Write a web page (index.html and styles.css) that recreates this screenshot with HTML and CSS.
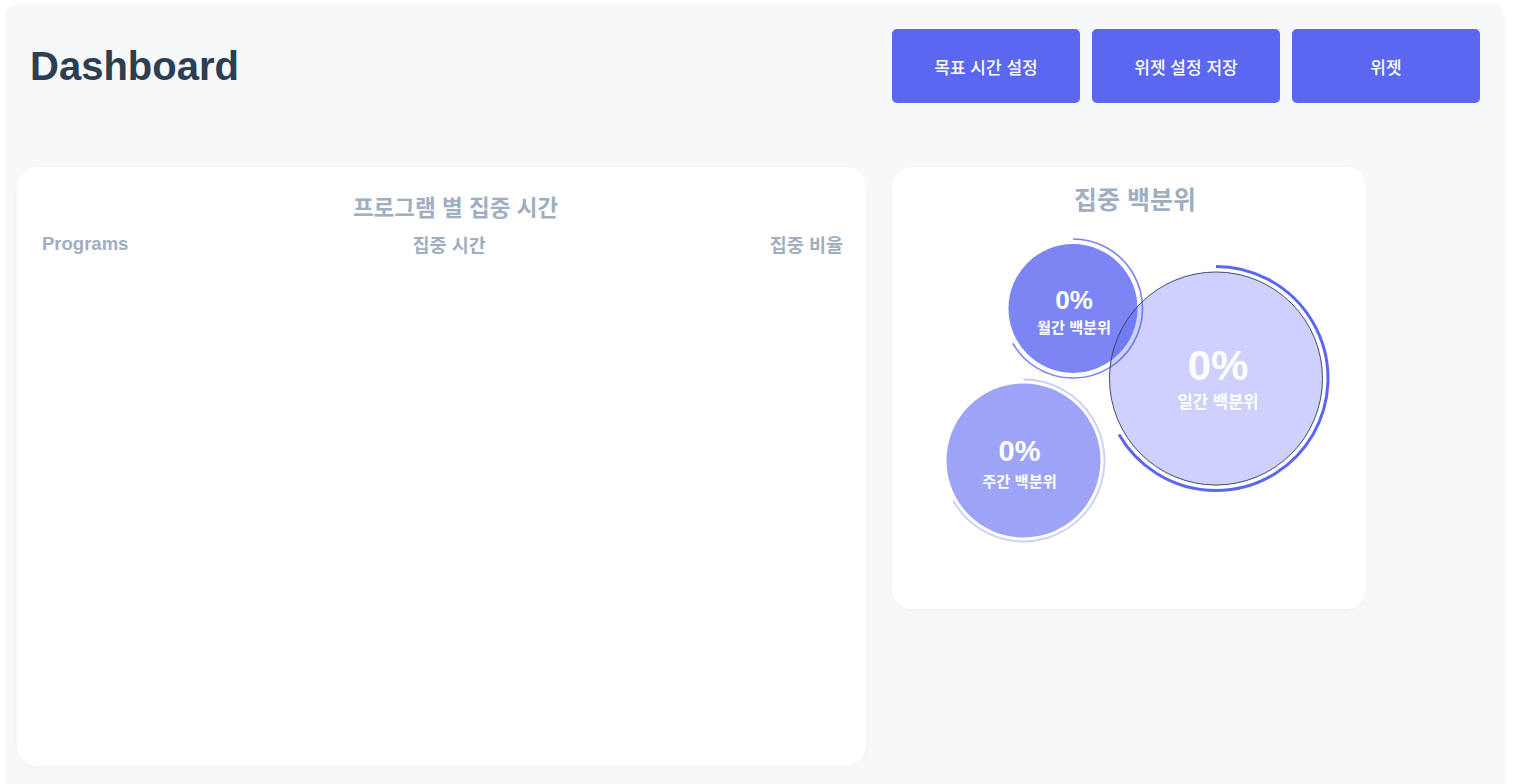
FILE: index.html
```html
<!DOCTYPE html>
<html lang="ko">
<head>
<meta charset="utf-8">
<title>Dashboard</title>
<link rel="stylesheet" href="styles.css">
</head>
<body>
<div class="app">
  <header class="topbar">
    <h1 class="page-title">Dashboard</h1>
    <div class="actions">
      <button class="btn">목표 시간 설정</button>
      <button class="btn">위젯 설정 저장</button>
      <button class="btn">위젯</button>
    </div>
  </header>
  <main class="cards">
    <section class="card card-programs">
      <h2 class="card-title">프로그램 별 집중 시간</h2>
      <div class="table-head">
        <span class="col col-en">Programs</span>
        <span class="col">집중 시간</span>
        <span class="col">집중 비율</span>
      </div>
    </section>
    <section class="card card-percentile">
      <h2 class="card-title big">집중 백분위</h2>
      <svg class="bubbles" width="474" height="330" viewBox="0 0 474 330">
        <!-- monthly -->
        <circle cx="181" cy="78.5" r="64.5" fill="rgba(91,103,241,0.8)"/>
        <path d="M181 9 A69.5 69.5 0 1 1 120.8 113.25" fill="none" stroke="rgba(91,103,241,0.8)" stroke-width="1.6"/>
        <!-- weekly -->
        <circle cx="131.5" cy="230.5" r="77" fill="rgba(91,103,241,0.6)"/>
        <path d="M131.5 149.5 A81 81 0 1 1 61.35 271" fill="none" stroke="rgba(91,103,241,0.32)" stroke-width="1.8"/>
        <!-- daily -->
        <circle cx="324" cy="148.5" r="106.5" fill="rgba(91,103,241,0.3)" stroke="#2d3e50" stroke-width="0.9"/>
        <path d="M324 36.5 A112 112 0 1 1 227 204.5" fill="none" stroke="#5b67f1" stroke-width="3"/>
        <text class="pct" x="182" y="79" font-size="26">0%</text>
        <text class="lbl" x="182" y="103" font-size="15.2">월간 백분위</text>
        <text class="pct" x="326" y="150" font-size="42">0%</text>
        <text class="lbl" x="326" y="178" font-size="16.6">일간 백분위</text>
        <text class="pct" x="127.5" y="231" font-size="29">0%</text>
        <text class="lbl" x="127.5" y="257" font-size="15.3">주간 백분위</text>
      </svg>
    </section>
  </main>
</div>
</body>
</html>
```
FILE: styles.css
```css
html, body {
  margin: 0;
  padding: 0;
  background: #ffffff;
}

body {
  font-family: "Liberation Sans", "Noto Sans CJK KR", sans-serif;
}

.app {
  margin: 4px 8px 0 5px;
  min-height: 800px;
  background: #f7f8fa;
  border-radius: 12px 12px 0 0;
  padding: 0 12px 12px 12px;
  box-sizing: border-box;
}

.topbar {
  display: flex;
  align-items: center;
  justify-content: space-between;
  padding: 25px 13px;
}

.page-title {
  margin: 0;
  font-size: 40px;
  line-height: 1.2;
  font-weight: 700;
  color: #2c3e50;
}

.actions {
  display: flex;
  gap: 12px;
}

.btn {
  width: 188px;
  height: 74px;
  border: none;
  border-radius: 5px;
  background: #5b67f1;
  color: #ffffff;
  font-family: "Noto Sans CJK KR", sans-serif;
  font-size: 17px;
  font-weight: 500;
  padding: 0;
}

.cards {
  display: flex;
  align-items: flex-start;
  gap: 26px;
  margin-top: 39px;
}

.card {
  background: #ffffff;
  border-radius: 20px;
  box-shadow: 0 1px 4px rgba(0, 0, 0, 0.03);
  box-sizing: border-box;
}

.card-programs {
  width: 849px;
  height: 599px;
  padding: 24px 23px 0 25px;
}

.card-percentile {
  width: 474px;
  height: 442px;
  padding-top: 15px;
}

.card-title {
  margin: 0;
  text-align: center;
  font-family: "Noto Sans CJK KR", sans-serif;
  font-size: 22.5px;
  line-height: 30px;
  font-weight: 700;
  color: #a0aec0;
}

.card-programs .card-title {
  padding-left: 26px;
}

.card-title.big {
  font-size: 25px;
  line-height: 32px;
  padding-left: 12px;
}

.table-head {
  display: flex;
  justify-content: space-between;
  margin-top: 12px;
  font-family: "Noto Sans CJK KR", sans-serif;
  font-size: 18.5px;
  line-height: 22px;
  font-weight: 700;
  color: #a0aec0;
}

.table-head .col-en {
  font-family: "Liberation Sans", sans-serif;
}

.bubbles {
  display: block;
  margin-top: 16px;
}

.bubbles text {
  fill: #ffffff;
  text-anchor: middle;
  font-weight: 700;
}

.bubbles .pct {
  font-family: "Liberation Sans", sans-serif;
}

.bubbles .lbl {
  font-family: "Noto Sans CJK KR", sans-serif;
}
```
